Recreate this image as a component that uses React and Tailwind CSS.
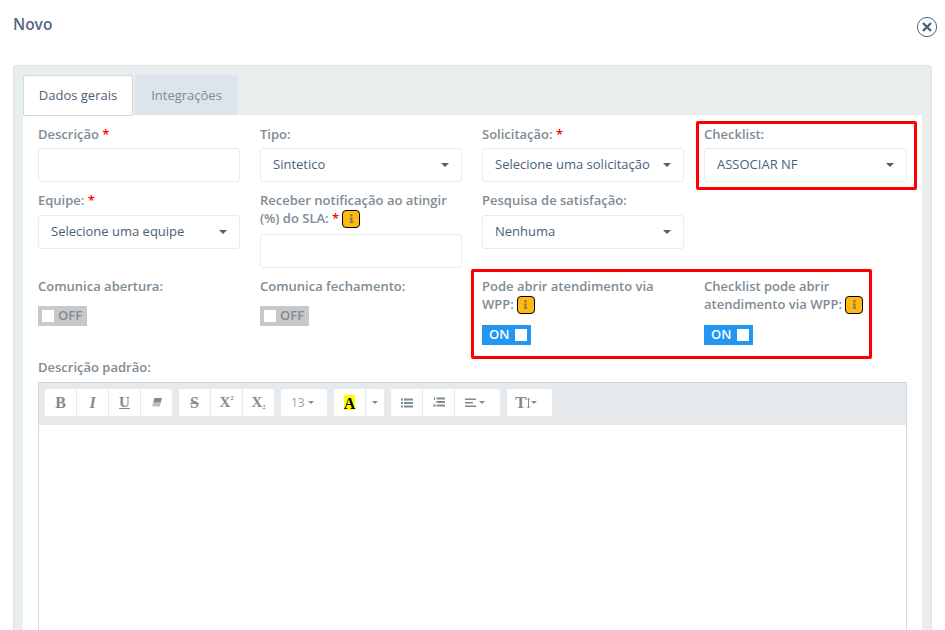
import { FaInfo } from 'react-icons/fa';

const Caret = ({ className = 'border-t-[#4b5f79] border-x-[4px] border-t-[4px]' }) => (
  <span className={`inline-block w-0 h-0 border-x-transparent ${className}`}></span>
);

const SmallCaret = () => <Caret className="border-t-[#7e8c96] border-x-[3px] border-t-[3px]" />;

const InfoBadge = () => (
  <span className="inline-flex align-[0px] -my-[3px] ml-[3px] items-center justify-center w-[18px] h-[18px] rounded-[4px] bg-[#ffb911] border border-black">
    <FaInfo size={9} className="text-[#8a7c50]" />
  </span>
);

const Label = ({ children, required, badge }) => (
  <label className="block text-[13px] leading-[18px] font-semibold text-[#7e8c96]">
    {children}
    {required && <span className="text-[#ff0000]"> *</span>}
    {badge && <InfoBadge />}
  </label>
);

const Input = () => (
  <input type="text" className="block w-full h-[34px] rounded-[3px] border border-[#e9ecef] bg-white outline-none" />
);

const Select = ({ value }) => (
  <div className="flex items-center justify-between w-full h-[34px] rounded-[3px] border border-[#e9ecef] bg-white pl-[12px] pr-[12px] text-[13px] text-[#4b5f79]">
    <span className="truncate">{value}</span>
    <Caret />
  </div>
);

const Toggle = ({ on }) =>
  on ? (
    <div className="flex items-center w-[49px] h-[20px] bg-[#2196f3] text-white text-[13px] font-semibold pl-[7px]">
      <span className="w-[19px]">ON</span>
      <span className="ml-[7px] w-[12px] h-[12px] bg-white"></span>
    </div>
  ) : (
    <div className="flex items-center w-[49px] h-[20px] bg-[#c8c8c8] text-[#7e8c96] text-[13px] font-semibold pl-[4px]">
      <span className="w-[12px] h-[12px] bg-white"></span>
      <span className="ml-[4px]">OFF</span>
    </div>
  );

const ToolBtn = ({ children, className = 'w-[32px] justify-center' }) => (
  <div className={`flex items-center h-[27px] bg-white text-[#7e8c96] border-r border-[#e6eaed] last:border-r-0 ${className}`}>
    {children}
  </div>
);

const ToolGroup = ({ children }) => (
  <div className="flex rounded-[2px] overflow-hidden">{children}</div>
);

const serif = 'font-["Liberation_Serif",serif]';

const BulletIcon = () => (
  <svg width="12" height="10" viewBox="0 0 12 10" fill="currentColor">
    <rect y="0.5" width="2" height="2" />
    <rect x="3" y="0.5" width="9" height="2" />
    <rect y="4" width="2" height="2" />
    <rect x="3" y="4" width="9" height="2" />
    <rect y="7.5" width="2" height="2" />
    <rect x="3" y="7.5" width="9" height="2" />
  </svg>
);

const NumberIcon = () => (
  <svg width="12" height="11" viewBox="0 0 12 11" fill="currentColor">
    <rect x="1" y="0" width="1" height="3" />
    <rect x="0.2" y="7" width="2.4" height="3" opacity="0.7" />
    <rect x="3.5" y="0.5" width="8.5" height="2" />
    <rect x="3.5" y="4" width="8.5" height="2" />
    <rect x="3.5" y="7.5" width="8.5" height="2" />
  </svg>
);

const Toolbar = () => (
  <div className="flex gap-[7px] h-[42px] bg-[#e6eaed] px-[6px] pt-[6px]">
    <ToolGroup>
      <ToolBtn><span className={`${serif} font-bold text-[16px] leading-none`}>B</span></ToolBtn>
      <ToolBtn><span className={`${serif} italic font-bold text-[16px] leading-none`}>I</span></ToolBtn>
      <ToolBtn><span className={`${serif} underline font-bold text-[15px] leading-none`}>U</span></ToolBtn>
      <ToolBtn className="w-[31px] justify-center">
        <svg width="10" height="9" viewBox="0 0 10 9">
          <path d="M2.4 0H10L8.8 4.5H1.2Z" fill="currentColor" />
          <path d="M1.2 4.5H8.8L7.8 8.5H0.3Z" fill="currentColor" opacity="0.55" />
        </svg>
      </ToolBtn>
    </ToolGroup>
    <ToolGroup>
      <ToolBtn><span className={`${serif} line-through font-bold text-[16px] leading-none`}>S</span></ToolBtn>
      <ToolBtn>
        <span className={`${serif} flex items-start font-bold text-[15px] leading-none`}>X<span className="text-[6px] leading-none">2</span></span>
      </ToolBtn>
      <ToolBtn className="w-[31px] justify-center">
        <span className={`${serif} flex items-end font-bold text-[15px] leading-none`}>X<span className="text-[6px] leading-none">2</span></span>
      </ToolBtn>
    </ToolGroup>
    <ToolGroup>
      <ToolBtn className="w-[46px] pl-[10px] gap-[3px] text-[12px] text-[#9aa5ad]">
        <span>13</span>
        <SmallCaret />
      </ToolBtn>
    </ToolGroup>
    <ToolGroup>
      <ToolBtn>
        <span className={`${serif} flex items-end justify-center w-[11px] h-[15px] bg-[#ffff00] text-black font-bold text-[16px] leading-[13px]`}>A</span>
      </ToolBtn>
      <ToolBtn className="w-[18px] justify-center"><SmallCaret /></ToolBtn>
    </ToolGroup>
    <ToolGroup>
      <ToolBtn><BulletIcon /></ToolBtn>
      <ToolBtn><NumberIcon /></ToolBtn>
      <ToolBtn className="w-[45px] pl-[10px] gap-[3px]">
        <svg width="11" height="10" viewBox="0 0 11 10" fill="currentColor">
          <rect y="0.5" width="11" height="1.5" />
          <rect y="4" width="8" height="1.5" />
          <rect y="7.5" width="11" height="1.5" />
        </svg>
        <SmallCaret />
      </ToolBtn>
    </ToolGroup>
    <ToolGroup>
      <ToolBtn className="w-[45px] pl-[8px]">
        <span className={`${serif} font-bold text-[17px] leading-none`}>T</span>
        <svg width="5" height="12" viewBox="0 0 5 12" fill="none" stroke="currentColor" strokeWidth="1">
          <path d="M2.5 1V11M1 2.5L2.5 1L4 2.5M1 9.5L2.5 11L4 9.5" />
        </svg>
        <SmallCaret />
      </ToolBtn>
    </ToolGroup>
  </div>
);

export default function App() {
  return (
    <div className="h-screen overflow-hidden bg-white font-['Open_Sans',sans-serif] text-[#4b5f79]">
      {/* --- Header --- */}
      <div className="flex justify-between pl-[13px] pr-[7px] pt-[13px] h-[65px]">
        <h1 className="text-[15.5px] leading-[22px] font-semibold text-[#56687f]">Novo</h1>
        <svg width="22" height="22" viewBox="0 0 22 22" fill="none" stroke="#4b5f79" className="mt-[3px]">
          <circle cx="11" cy="11" r="9.6" strokeWidth="1" />
          <path d="M7 7L15 15M15 7L7 15" strokeWidth="2.4" />
        </svg>
      </div>

      {/* --- Panel --- */}
      <div className="mx-[13px] h-[600px] rounded-t-[3px] border border-[#dde2e3] bg-[#e8eded] px-[9px] pt-[9px]">
        <div className="flex gap-[2px] h-[40px]">
          <div className="w-[110px] h-[41px] z-10 flex items-center justify-center rounded-t-[3px] rounded-b-[2px] border border-[#d5d9db] bg-white text-[13px]">
            Dados gerais
          </div>
          <div className="w-[103px] h-[41px] flex items-center justify-center rounded-t-[3px] bg-[#dde4ec] text-[13px] text-[#7e8c96]">
            Integrações
          </div>
        </div>

        <div className="relative bg-white h-[600px] px-[15px] pt-[10px]">
          {/* --- Highlight boxes --- */}
          <div className="absolute left-[673px] top-[6px] w-[221px] h-[69px] rounded-[2px] border-[3px] border-[#ff0000]"></div>
          <div className="absolute left-[448px] top-[154px] w-[401px] h-[90px] rounded-[2px] border-[3px] border-[#ff0000]"></div>

          <div className="grid grid-cols-[202px_202px_202px_203px] gap-x-[20px]">
            <div className="h-[66px]">
              <Label required>Descrição</Label>
              <div className="mt-[5px]"><Input /></div>
            </div>
            <div>
              <Label>Tipo:</Label>
              <div className="mt-[5px]"><Select value="Sintetico" /></div>
            </div>
            <div>
              <Label required>Solicitação:</Label>
              <div className="mt-[5px]"><Select value="Selecione uma solicitação" /></div>
            </div>
            <div>
              <Label>Checklist:</Label>
              <div className="mt-[5px]"><Select value="ASSOCIAR NF" /></div>
            </div>

            <div className="h-[86px]">
              <Label required>Equipe:</Label>
              <div className="mt-[6px]"><Select value="Selecione uma equipe" /></div>
            </div>
            <div>
              <Label required badge>Receber notificação ao atingir (%) do SLA:</Label>
              <div className="mt-[7px]"><Input /></div>
            </div>
            <div>
              <Label>Pesquisa de satisfação:</Label>
              <div className="mt-[6px]"><Select value="Nenhuma" /></div>
            </div>
            <div></div>

            <div className="h-[81px]">
              <Label>Comunica abertura:</Label>
              <div className="mt-[11px]"><Toggle /></div>
            </div>
            <div>
              <Label>Comunica fechamento:</Label>
              <div className="mt-[11px]"><Toggle /></div>
            </div>
            <div>
              <Label badge>Pode abrir atendimento via WPP:</Label>
              <div className="mt-[12px]"><Toggle on /></div>
            </div>
            <div>
              <Label badge>Checklist pode abrir atendimento via WPP:</Label>
              <div className="mt-[12px]"><Toggle on /></div>
            </div>
          </div>

          <Label>Descrição padrão:</Label>
          <div className="mt-[6px] h-[400px] border border-[#d5d9db] border-t-[#cfd3d5]">
            <Toolbar />
          </div>
        </div>
      </div>
    </div>
  );
}
